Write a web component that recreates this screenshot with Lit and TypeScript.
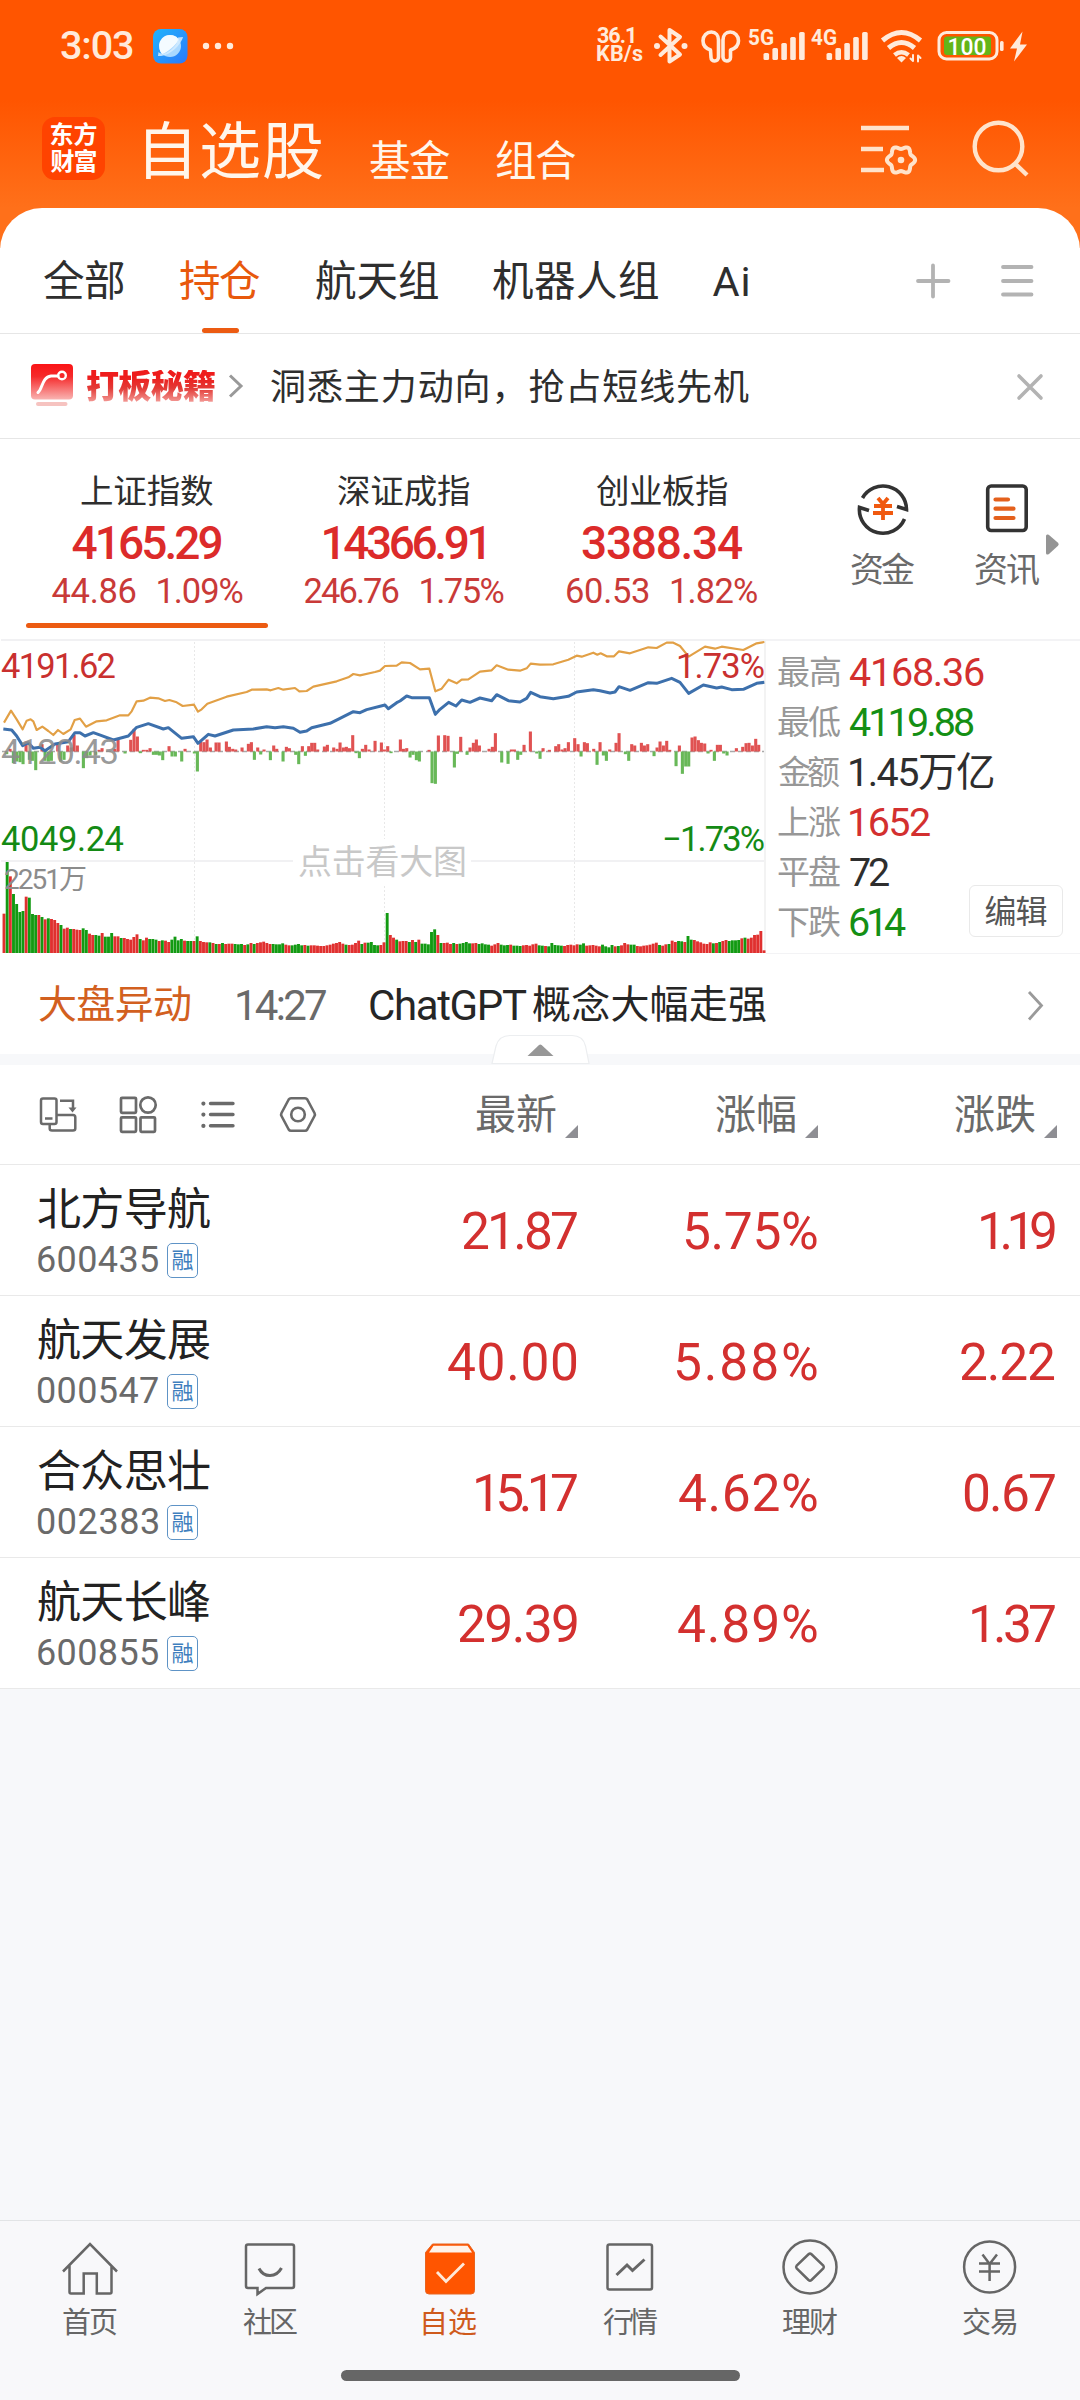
import { LitElement, html, svg, css } from "lit";
import { customElement, property } from "lit/decorators.js";

const measurer = document.createElement("canvas").getContext("2d")!;

/** One line of text whose visible glyphs span exactly `w` pixels. */
@customElement("fit-text")
class FitText extends LitElement {
  @property({ attribute: false }) text = "";
  @property({ attribute: false }) w = 0;

  static styles = css`
    :host { display: inline-block; flex: none; line-height: 1; white-space: pre; }
    span { display: block; font-kerning: none; }
  `;

  render() {
    return html`<span>${this.text}</span>`;
  }

  updated() {
    const cs = getComputedStyle(this);
    measurer.font = `${cs.fontWeight} ${cs.fontSize} ${cs.fontFamily}`;
    measurer.fontKerning = "none";
    const m = measurer.measureText(this.text);
    const ink = m.actualBoundingBoxRight + m.actualBoundingBoxLeft;
    const span = this.renderRoot.querySelector("span")!;
    const n = [...this.text].length;
    span.style.letterSpacing = `${((this.w - ink) / Math.max(1, n - 1)).toFixed(3)}px`;
    span.style.marginLeft = `${m.actualBoundingBoxLeft.toFixed(2)}px`;
    this.style.width = `${this.w}px`;
  }
}

const t = (text: string, w: number, cls = "") =>
  html`<fit-text class=${cls} .text=${text} .w=${w}></fit-text>`;

interface Index { name: string; value: string; vw: number; diff: string; dw: number; pct: string; pw: number; active?: boolean }
const indices: Index[] = [
  { name: "上证指数", value: "4165.29", vw: 149, diff: "44.86", dw: 84, pct: "1.09%", pw: 85, active: true },
  { name: "深证成指", value: "14366.91", vw: 161, diff: "246.76", dw: 94, pct: "1.75%", pw: 83 },
  { name: "创业板指", value: "3388.34", vw: 160, diff: "60.53", dw: 82, pct: "1.82%", pw: 86 },
];

const tabs: [string, number][] = [["全部", 80], ["持仓", 80], ["航天组", 122], ["机器人组", 165], ["Ai", 36]];

const stats: [string, string, number, string][] = [
  ["最高", "4168.36", 134, "red"],
  ["最低", "4119.88", 124, "green"],
  ["金额", "1.45万亿", 144, "dark"],
  ["上涨", "1652", 80, "red"],
  ["平盘", "72", 39, "dark"],
  ["下跌", "614", 56, "green"],
];

const stocks: { name: string; code: string; cells: [string, number][] }[] = [
  { name: "北方导航", code: "600435", cells: [["21.87", 114], ["5.75%", 132], ["1.19", 74]] },
  { name: "航天发展", code: "000547", cells: [["40.00", 129], ["5.88%", 141], ["2.22", 94]] },
  { name: "合众思壮", code: "002383", cells: [["15.17", 101], ["4.62%", 138], ["0.67", 91]] },
  { name: "航天长峰", code: "600855", cells: [["29.39", 118], ["4.89%", 139], ["1.37", 83]] },
];

/* Minute volume, three units per pixel; a trailing g marks a falling minute. */
const volume = (
  "118 273g 230 177g 147g 123g 126g 169 166g 117g 114g 114 108g 101 104g 102 99 90 84g 73 76 72g 72 70 69 74g 69g 58 54 54g 52g 60 49g 49g 60g 50 50 45g 45 42 " +
  "40 48 56 42g 38 46 42g 42g 40g 36 38g 37 33 40g 49g 38g 42g 37 36g 36g 36 50g 36 33 32 32g 30 27g 27 30g 27 28 28 27g 26g 27g 24 26g 30 27g " +
  "30 32 34 30 27 27g 26g 26g 29g 25 23 23g 25g 27g 23g 24 22g 23 23 22 21 21 23 25 28 30 33 28 25g 24 25 30 37 27g 31 31g 33g 24g 23g 24 " +
  "32 120g 54 46 40g 35 36 36 33g 39 33g 40 28g 28g 26g 63g 71g 54 30g 30 31 27 30g 27 28g 30g 33g 29g 29 30 27g 29g 26g 25g 22 26 30 25g 23g 24g " +
  "25 22g 22g 21g 23 24 22 26 28 23g 22g 21 20g 30g 24g 23g 22g 21 24 25 23 26 25g 29g 22 23 24 22 20 25g 20g 17g 24g 20 21g 23 30 26 25g 25g " +
  "21 20 22 23 25 28 31 24g 22 26 27g 37 33 36g 35g 33 51g 40g 39 35 32 28 27 32 29g 30 33g 36 39 36g 38g 38g 39g 44 46g 43 46 54 55 66 8 0 100"
).split(" ");

/* Difference bars around the base line: x and signed height, three units per pixel. */
const swing: number[][] = [
  [20, -8], [30, 8], [40, -35], [50, -30], [60, -32], [69, -38], [78, 30], [88, -25], [97, -28], [107, -56], [126, 22], [135, -28], [145, -30], [154, -28],
  [173, 20], [182, -30], [192, -25], [203, 18], [213, 12], [222, 50], [232, 18], [250, -50], [260, -20], [270, -12], [287, -10], [297, 5], [306, 10], [344, 8], [354, 35], [375, -6],
  [392, 35], [402, 68], [412, 45], [421, -5], [430, 5], [440, 5], [450, 10], [460, -10], [469, -10], [478, -12], [488, -26], [507, 16], [516, -15], [526, -15],
  [545, -30], [555, 8], [583, -6], [592, -60], [602, 30], [612, 28], [621, 36], [631, 12], [648, 27], [657, 27], [679, 30], [688, 14], [698, 8], [707, 6], [726, 12], [745, 23], [754, 28],
  [763, -25], [773, 12], [782, -9], [792, 6], [811, -26], [821, 18], [830, 8], [849, -30], [859, 14], [868, 10], [887, -10], [896, -38], [907, 16], [916, -13], [926, 16],
  [935, 26], [944, 26], [953, 6], [973, 15], [982, 20], [1001, 12], [1011, 8], [1020, 27], [1030, 12], [1039, 14], [1048, 10], [1058, 49], [1068, -5], [1078, -20],
  [1087, 8], [1097, 20], [1107, 6], [1125, 32], [1144, 27], [1153, 6], [1163, 16], [1173, -5], [1201, 36], [1210, 8], [1220, 10], [1230, -18], [1239, -10], [1249, -26], [1258, -30],
  [1287, 5], [1296, -95], [1306, -97], [1315, 48], [1334, 49], [1344, 47], [1363, -48], [1372, -7], [1382, 44], [1401, -10], [1410, 12], [1420, 26], [1429, 36], [1438, 18], [1467, 8], [1477, 14],
  [1486, 55], [1505, -33], [1524, -37], [1534, 6], [1543, 6], [1553, -25], [1562, -10], [1572, 20], [1591, 60], [1610, -6], [1620, -22], [1629, 10], [1648, 5], [1667, 16], [1676, 22], [1686, 6], [1695, 10], [1705, 28],
  [1724, 40], [1734, 22], [1743, -15], [1753, 28], [1762, 25], [1781, 8], [1791, -40], [1800, 28], [1810, -12], [1819, -28], [1829, 6], [1848, 26], [1857, 55], [1876, -8], [1886, -28], [1895, 22], [1904, 18],
  [1924, 26], [1933, 18], [1943, 22], [1962, -14], [1971, 12], [1980, 30], [1990, 18], [2000, 32], [2009, 5], [2028, -44], [2038, 18], [2047, -67], [2057, -45], [2066, -45], [2076, 42], [2085, 45], [2095, 34], [2104, 26], [2114, 24],
  [2124, -6], [2133, 5], [2143, -28], [2152, 20], [2161, 20], [2171, -6], [2181, -12], [2209, 10], [2228, 14], [2238, 25], [2247, 26], [2257, 18], [2267, 38], [2276, 20],
];

const orangeLine =
  "12,278 33,242 50,268 68,298 80,272 92,268 100,274 110,300 127,290 145,303 160,315 174,300 190,312 212,298 224,270 240,266 258,290 290,274 320,271 360,256 385,256 395,244 410,214 430,212 450,203 475,205 495,213 508,210 530,217 548,228 582,224 594,245 605,238 622,221 680,200 740,186 755,179 800,178 812,181 835,174 850,179 885,174 898,184 920,183 940,170 1010,154 1045,142 1060,132 1080,136 1125,126 1140,122 1155,108 1190,107 1205,97 1230,99 1260,118 1288,116 1306,184 1325,176 1346,149 1370,160 1385,149 1405,148 1440,125 1475,121 1490,106 1525,119 1560,122 1580,115 1592,101 1620,104 1660,103 1705,89 1730,77 1745,80 1780,68 1792,74 1802,70 1820,79 1842,79 1857,64 1890,70 1945,52 1970,54 2000,38 2020,38 2040,48 2066,80 2115,50 2145,56 2165,50 2230,60 2270,40 2293,36";
const blueLine =
  "10,297 35,300 50,318 68,347 85,338 100,355 120,352 135,362 165,342 205,335 225,308 240,308 255,318 280,308 305,317 340,330 385,318 410,292 445,281 490,297 505,293 545,325 580,320 594,340 625,313 645,318 700,300 760,297 800,290 825,293 850,290 880,295 900,307 920,303 935,293 990,280 1020,265 1060,245 1080,248 1100,239 1155,225 1165,236 1190,218 1200,213 1220,198 1235,203 1288,203 1306,253 1320,238 1346,217 1368,228 1385,210 1410,217 1440,204 1475,212 1490,194 1525,212 1560,216 1580,205 1592,187 1620,200 1660,206 1705,199 1730,186 1780,179 1800,182 1830,189 1845,186 1857,170 1890,181 1945,158 1970,160 2015,145 2040,157 2066,190 2110,165 2150,174 2165,171 2195,179 2230,178 2270,160 2293,157";

const gearPath = (cx: number, cy: number, r: number, amp: number) => {
  let d = "";
  for (let i = 0; i <= 72; i++) {
    const a = (i / 72) * Math.PI * 2;
    const rr = r + amp * Math.cos(6 * a);
    d += `${i ? "L" : "M"}${(cx + rr * Math.cos(a)).toFixed(2)} ${(cy + rr * Math.sin(a)).toFixed(2)}`;
  }
  return d + "Z";
};

@customElement("market-chart")
class MarketChart extends LitElement {
  static styles = css`
    :host { display: block; width: 766px; height: 314px; }
    svg { display: block; }
    text { font-family: Roboto, "Noto Sans CJK SC", sans-serif; font-size: 34.5px; }
    .up { fill: #c9302f; }
    .down { fill: #148a14; }
    .mid { fill: #8c8c8c; fill-opacity: 0.9; }
    .vol { fill: #8c8c8c; font-size: 28px; }
    .hint { fill: #c8c8c8; font-size: 34px; }
  `;

  render() {
    return html`<svg width="766" height="314" viewBox="0 0 766 314">
      <path d="M1 1H766M1 222H766" stroke="#f1f1f3" stroke-width="2" fill="none" />
      <path d="M194.5 3V313M384.5 3V313M574.5 3V313" stroke="#e8e8e8" stroke-width="1" stroke-dasharray="2 2" />
      <path d="M765 0V314" stroke="#f3f3f3" stroke-width="2" />
      <rect x="293" y="200" width="178" height="46" fill="#fff" />
      <path d="M2 112.5H764" stroke="#8d8d8d" stroke-width="1.3" stroke-dasharray="5 3" opacity=".75" />
      ${swing.map(([x, h]) => svg`<rect x=${x / 3 - 1.5} y=${112.5 - Math.max(h, 0) / 3} width="3.1" height=${Math.abs(h) / 3}
        fill=${h > 0 ? "#e05252" : "#68b858"} />`)}
      ${volume.map((v, i) => svg`<rect x=${(4 + i * 3.1667 - 1.45).toFixed(2)} y=${314 - parseInt(v) / 3} width="2.9" height=${parseInt(v) / 3}
        fill=${v.endsWith("g") ? "#129a12" : "#e0302f"} />`)}
      <g transform="translate(0 -9) scale(.33333)" fill="none" stroke-linejoin="round">
        <polyline points=${orangeLine} stroke="#e2a046" stroke-width="6.5" />
        <polyline points=${blueLine} stroke="#3d70ac" stroke-width="9" />
      </g>
      <text class="up" x="1" y="39" textLength="115">4191.62</text>
      <text class="mid" x="1" y="124.5" textLength="118">4120.43</text>
      <text class="down" x="1" y="212" textLength="123">4049.24</text>
      <text class="vol" x="4" y="250" textLength="83">2251万</text>
      <text class="up" x="676" y="39" textLength="89">1.73%</text>
      <text class="down" x="662" y="212" textLength="103">−1.73%</text>
      <text class="hint" x="298" y="235" textLength="169">点击看大图</text>
    </svg>`;
  }
}

@customElement("app-root")
class AppRoot extends LitElement {
  static styles = css`
    :host {
      display: flex; flex-direction: column; width: 1080px; height: 2400px; overflow: hidden;
      background: #f7f8fa; color: #2e2e2e; font-family: Roboto, "Noto Sans CJK SC", sans-serif; line-height: 1;
    }
    svg { display: block; flex: none; overflow: visible; }
    .red { color: #d3302f; }
    .green { color: #148f14; }
    .dark { color: #2e2e2e; }

    .top { height: 248px; flex: none; background: linear-gradient(#ff5500 0, #ff5500 100px, #ff701a 208px, #ff701a); color: #fff6ec; }
    .status { height: 92px; display: flex; box-sizing: border-box; padding-left: 61px; color: #ffeadb; align-items: flex-start; }
    .clock { font-size: 39.5px; font-weight: 500; margin-top: 26px; }
    .status-left { margin: 28px 0 0 20px; }
    .speed { display: flex; flex-direction: column; margin: 27px 0 0 364px; font-size: 21.5px; font-weight: 700; }
    .speed fit-text { height: 18px; line-height: 18px; }
    .status-right { margin: 24px 0 0 8px; }
    .title-row { height: 116px; box-sizing: border-box; padding: 0 0 24px 42px; display: flex; align-items: flex-end; }
    .logo { width: 63px; height: 63px; border-radius: 13px; background: #ff4300; margin-bottom: 4px; display: flex; flex-direction: column; align-items: center; justify-content: center; gap: 3px; color: #fff; font-size: 24px; font-weight: 700; }
    .title { font-size: 62px; margin-left: 41px; }
    .sub { font-size: 41.5px; margin: 0 0 2px 48px; }
    .sub + .sub { margin-left: 46px; }
    .ic-menu { margin: 0 0 4px 282px; }
    .ic-search { margin: 0 0 4px 49px; }

    .card { margin-top: -40px; background: #fff; border-radius: 42px 42px 0 0; flex: none; }
    .tabs { height: 125px; box-sizing: border-box; padding: 28px 0 0 44px; display: flex; }
    .tab { height: 97px; display: flex; flex-direction: column; align-items: center; font-size: 41.5px; margin-right: 56px; }
    .tab:nth-child(3) { margin-right: 55px; }
    .tab:nth-child(4) { margin-right: 54px; }
    .tab .lbl { flex: 1; display: flex; align-items: center; }
    .bar { width: 37px; height: 5px; border-radius: 3px; }
    .tab.on { color: #e8590c; }
    .tab.on .bar { background: #ec5b12; }
    .tab-tools { margin: 27px 0 0 110px; }
    .promo { height: 105px; box-sizing: border-box; border-top: 1px solid #e6e6e6; display: flex; align-items: center; padding-left: 31px; }
    .promo-name { font-size: 33px; font-weight: 900; margin-left: 13px; background: linear-gradient(#ee1c1c 20%, #e33a36 55%, #f4a09c 100%); -webkit-background-clip: text; background-clip: text; color: transparent; }
    .promo-chev { margin-left: 13px; }
    .promo-text { font-size: 36px; margin: 4px 0 0 27px; }
    .promo-x { margin-left: 268px; margin-top: 2px; }

    .indices { height: 201px; box-sizing: border-box; border-top: 1px solid #e6e6e6; display: flex; padding-left: 18px; }
    .index { width: 258px; padding-top: 27px; display: flex; flex-direction: column; align-items: center; }
    .index + .index { position: relative; left: -1px; }
    .iname, .ivalue, .ichange { display: flex; align-items: center; flex: none; }
    .iname { height: 52px; font-size: 33.5px; }
    .ivalue { height: 50px; font-size: 46px; font-weight: 500; color: #dc2b2a; }
    .ichange { height: 47px; font-size: 34.5px; gap: 22px; color: #c93a38; }
    .iline { width: 242px; height: 5px; border-radius: 3px; margin-top: 8px; }
    .on .iline { background: #ec5b12; }
    .quick { display: flex; margin-left: 29px; position: relative; }
    .qitem { width: 124px; padding-top: 41px; display: flex; flex-direction: column; align-items: center; font-size: 34px; color: #6a6a6a; gap: 17px; }
    .more { position: absolute; left: 225px; top: 95px; }

    .market { display: flex; height: 315px; position: relative; }
    .stats { flex: 1; padding: 6.5px 0 0 12px; box-sizing: border-box; border-top: 2px solid #f3f3f5; border-bottom: 1px solid #f3f3f5; }
    .stat { height: 50px; display: flex; align-items: center; }
    .stat .k { font-size: 33px; color: #979797; }
    .stat .v { font-size: 39.5px; margin-left: 10px; }
    .edit { position: absolute; left: 969px; top: 246px; width: 94px; height: 52px; box-sizing: border-box; border: 1px solid #e9e9e9; border-radius: 6px; background: #fff; display: flex; align-items: center; justify-content: center; font-size: 32px; color: #555; padding-top: 2px; }

    .news { height: 100px; box-sizing: border-box; padding: 3px 0 0 39px; display: flex; align-items: center; font-size: 39px; position: relative; }
    .news .tag { color: #d2601f; }
    .news .time { font-size: 42px; color: #6a6a6a; margin-left: 47px; }
    .news .head { margin-left: 44px; color: #262626; font-size: 42px; }
    .news .head2 { margin-left: 6px; color: #262626; }
    .news .chev { margin-left: 262px; }
    .strip { height: 11px; background: #f7f8fa; }
    .fold { position: absolute; left: 490px; top: 80px; }

    .grid { display: grid; grid-template-columns: 339px 239px 240px 262px; align-items: center; box-sizing: border-box; border-bottom: 1px solid #e9e9e9; }
    .thead { height: 100px; }
    .views { display: flex; gap: 36px; padding-left: 36px; }
    .col { display: flex; justify-content: flex-end; align-items: center; font-size: 41px; color: #6a6a6a; gap: 9px; }
    .col:last-child { padding-right: 23px; }
    .col fit-text { margin-top: 2px; }
    .col svg { margin-top: 34px; }
    .row { height: 131px; }
    .stock { padding: 4px 0 0 38px; }
    .stock .name { font-size: 44px; color: #222; display: block; margin-top: 2px; }
    .codeline { display: flex; align-items: center; margin-top: 10px; gap: 9px; font-size: 36px; color: #6a6a6a; }
    .badge { width: 31px; height: 35px; box-sizing: border-box; border: 1.5px solid #5e93c6; border-radius: 5px; display: flex; align-items: center; justify-content: center; font-size: 22px; color: #3f7fbe; padding-top: 1px; }
    .num { display: flex; justify-content: flex-end; font-size: 51.5px; color: #d3302f; padding: 4px 1px 0 0; }
    .num:last-child { padding-right: 25px; }

    .fill { flex: 1; }
    .nav { height: 180px; flex: none; box-sizing: border-box; background: #f8f8fa; border-top: 1px solid #e2e4e6; display: flex; flex-direction: column; align-items: center; }
    .nav-items { display: flex; width: 1080px; height: 149px; }
    .nav-item { width: 180px; padding-top: 16px; display: flex; flex-direction: column; align-items: center; gap: 12px; color: #666; font-size: 29px; }
    .nav-item.on { color: #cf5a1c; }
    .home { width: 399px; height: 11px; border-radius: 6px; background: #666; }
  `;

  private statusRight() {
    const bars = (x: number) => [0, 1, 2, 3, 4].map((i) => {
      const h = [7, 12, 17, 23, 28][i];
      return svg`<rect x=${x + i * 8.9} y=${36.5 - h} width="5.6" height=${h} rx="1.6" fill="#ffeadb" />`;
    });
    return html`<svg class="status-right" width="380" height="44" viewBox="651 24 380 44">
      <g fill="none" stroke="#ffeadb" stroke-width="4" stroke-linejoin="round" stroke-linecap="round">
        <path d="M660.5 36.5L680 54.5L669.5 61.5V30L680 37L660.5 55" />
        <path d="M710.5 50C705.5 48.5 703 44.8 703 40.8C703 35.6 706.8 32 711.3 32C715.8 32 718.5 35.5 718.5 40V57C718.5 62.3 711 62.3 711 57.5Z" stroke-width="3.6" />
        <path d="M730.5 50C735.5 48.5 738.5 44.8 738.5 40.8C738.5 35.6 734.7 32 730.2 32C725.7 32 723 35.5 723 40V57C723 62.3 730.5 62.3 730.5 57.5Z" stroke-width="3.6" />
        <path d="M882.5 40.5Q901.5 24.5 920.5 40.5" stroke-width="5" stroke-linecap="butt" />
        <path d="M888.5 48Q901.5 37 914.5 48" stroke-width="5" stroke-linecap="butt" />
        <path d="M894.5 55Q901.5 49.5 908.5 55" stroke-width="4.6" stroke-linecap="butt" />
        <path d="M913 55V61L910.5 58.5M918 61.5V55.5L920.5 58" stroke-width="2" />
      </g>
      <g fill="#ffeadb">
        <circle cx="657" cy="46" r="3" /><circle cx="684.5" cy="46" r="3" />
        <path d="M897 58Q901.5 54 906 58L901.5 62.5Z" />
        <path d="M1022.5 31.5L1010 48.5H1017L1014 61.5L1027 44.5H1020Z" />
        <rect x="1000" y="41" width="3.6" height="10" rx="1.6" />
      </g>
      <g transform="translate(0 23.5)">${bars(763.5)}${bars(826.5)}</g>
      <rect x="939" y="32.5" width="58" height="26.5" rx="7.5" fill="none" stroke="#ffeadb" stroke-width="3" />
      <rect x="944" y="36.5" width="47" height="18.5" rx="3" fill="#64b418" />
      <g font-family="Roboto, sans-serif" font-weight="700" font-size="22" fill="#ffeadb">
        <text x="748" y="45" textLength="26" lengthAdjust="spacingAndGlyphs">5G</text>
        <text x="811" y="45" textLength="26" lengthAdjust="spacingAndGlyphs">4G</text>
        <text x="947.5" y="54.5" font-size="24" font-weight="500" fill="#fff" textLength="39" lengthAdjust="spacingAndGlyphs">100</text>
      </g>
    </svg>`;
  }

  private top() {
    return html`<div class="top">
      <div class="status">
        ${t("3:03", 72, "clock")}
        <svg class="status-left" width="80" height="36" viewBox="153 28 80 36">
          <defs><linearGradient id="b" x1="0" y1="0" x2="1" y2="1"><stop offset="0" stop-color="#22b4fb" /><stop offset="1" stop-color="#2b79fb" /></linearGradient></defs>
          <rect x="153" y="29" width="34.5" height="34.5" rx="8" fill="url(#b)" />
          <circle cx="170" cy="46" r="11" fill="#a9d8ff" />
          <path d="M159.5 49A11 11 0 0 1 179 39.5C176 45 168 52 162 54.2A11 11 0 0 1 159.5 49Z" fill="#f4fbff" />
          <path d="M178 37.5L183 37C181 45 169 57 158 56L158.5 52C160 53.5 163 54.5 166 53C173 49.5 178.5 43 178 37.5Z" fill="#d3ecff" opacity=".85" />
          <g fill="#ffeadb"><circle cx="206" cy="46" r="3.2" /><circle cx="218" cy="46" r="3.2" /><circle cx="230" cy="46" r="3.2" /></g>
        </svg>
        <div class="speed">${t("36.1", 37)}${t("KB/s", 46)}</div>
        ${this.statusRight()}
      </div>
      <div class="title-row">
        <div class="logo">${t("东方", 46)}${t("财富", 46)}</div>
        ${t("自选股", 176, "title")}${t("基金", 80, "sub")}${t("组合", 80, "sub")}
        <svg class="ic-menu" width="61" height="60" viewBox="858 120 61 60" fill="none" stroke="#ffe3cb" stroke-width="4.4">
          <path d="M861 128H909M861 149H883M861 170H884" />
          <path d=${gearPath(901, 160, 12.6, 1.5)} stroke-width="4" /><circle cx="901" cy="160" r="3.3" fill="#ffe3cb" stroke="none" />
        </svg>
        <svg class="ic-search" width="64" height="64" viewBox="968 116 64 64" fill="none" stroke="#ffe3cb" stroke-width="4.4">
          <circle cx="998.5" cy="146.5" r="23.8" /><path d="M1014.5 163L1027 175" />
        </svg>
      </div>
    </div>`;
  }

  private promo() {
    return html`<div class="promo">
      <svg width="42" height="44" viewBox="31 365 42 44">
        <defs><linearGradient id="p" x1="0" y1="0" x2="0" y2="1"><stop offset="0" stop-color="#fb1416" /><stop offset=".35" stop-color="#f52a2b" /><stop offset="1" stop-color="#f9b4b2" /></linearGradient></defs>
        <rect x="31" y="365" width="42" height="35.5" rx="4" fill="url(#p)" />
        <rect x="36" y="403" width="31.5" height="4" rx="2" fill="#f6c3c0" />
        <path d="M38 393.5C42.5 390 42 378 51 377H58" fill="none" stroke="#fff" stroke-width="3" stroke-linecap="round" />
        <circle cx="62" cy="376.5" r="3.8" fill="none" stroke="#fff" stroke-width="2.4" />
      </svg>
      ${t("打板秘籍", 129, "promo-name")}
      <svg class="promo-chev" width="16" height="26" viewBox="229 373 16 26" fill="none" stroke="#999" stroke-width="3"><path d="M231 375.5L242 386L231 396.5" /></svg>
      ${t("洞悉主力动向，抢占短线先机", 478, "promo-text")}
      <svg class="promo-x" width="26" height="26" viewBox="0 0 26 26" fill="none" stroke="#b3b3b3" stroke-width="3.6" stroke-linecap="round"><path d="M2 2L24 24M24 2L2 24" /></svg>
    </div>`;
  }

  private indexRow() {
    return html`<div class="indices">
      ${indices.map((x) => html`<div class="index ${x.active ? "on" : ""}">
        <div class="iname">${t(x.name, 132)}</div>
        <div class="ivalue">${t(x.value, x.vw)}</div>
        <div class="ichange">${t(x.diff, x.dw)}${t(x.pct, x.pw)}</div>
        <div class="iline"></div>
      </div>`)}
      <div class="quick">
        <div class="qitem">
          <svg width="56" height="56" viewBox="0 0 56 56" fill="none" stroke="#333" stroke-width="3.6">
            <path d="M7.5 18A23.5 23.5 0 0 1 51.5 29.5L42 26.5" />
            <path d="M49.5 39A23.5 23.5 0 0 1 4.5 27.5L14 30.5" />
            <path d="M23 18L28 24L33 18M28 24V40M19 26H37M18 33H38" stroke="#f0590f" stroke-width="3.8" />
          </svg>
          ${t("资金", 64)}
        </div>
        <div class="qitem">
          <svg width="56" height="56" viewBox="0 0 56 56" fill="none" stroke="#333" stroke-width="3.6">
            <rect x="8.7" y="6" width="38.5" height="44.5" rx="3.5" />
            <path d="M16.5 19.5H29M16.5 28.7H34.5M16.5 38H34.5" stroke="#e4601c" stroke-width="4.2" stroke-linecap="round" />
          </svg>
          ${t("资讯", 64)}
        </div>
        <svg class="more" width="13" height="21" viewBox="0 0 13 21" fill="#949494"><path d="M0 2Q0 0 2 .5L3 1L12 8.8Q13.5 10.3 12 11.8L3 20L2 20.5Q0 21 0 19Z" /></svg>
      </div>
    </div>`;
  }

  private market() {
    return html`<div class="market">
      <market-chart></market-chart>
      <div class="stats">
        ${stats.map(([k, v, w, c]) => html`<div class="stat">${t(k, 62, "k")}${t(v, w, "v " + c)}</div>`)}
      </div>
      <div class="edit">${t("编辑", 61)}</div>
    </div>
    <div class="news">
      ${t("大盘异动", 151, "tag")}${t("14:27", 89, "time")}${t("ChatGPT", 157, "head")}${t("概念大幅走强", 233, "head2")}
      <svg class="chev" width="16" height="30" viewBox="0 0 16 30" fill="none" stroke="#9a9a9a" stroke-width="2.8"><path d="M1 1L13.500 14.500L1 28.500" /></svg>
      <svg class="fold" width="101" height="32" viewBox="490 1034 101 32">
        <path d="M492 1063.5L496 1046Q499 1035.5 510 1035.5H572Q583 1035.5 585.5 1046L589 1063.5Z" fill="#fff" stroke="#eceef0" stroke-width="1.2" />
        <path d="M527.5 1056L539 1045Q540.3 1044 541.6 1045L553.5 1056Z" fill="#979797" />
      </svg>
    </div>
    <div class="strip"></div>`;
  }

  private table() {
    const tri = html`<svg width="13" height="13" viewBox="0 0 13 13"><path d="M13 0V13H0Z" fill="#8e8e93" /></svg>`;
    return html`<div class="grid thead">
      <div class="views">
        <svg width="44" height="44" viewBox="36 1092.5 44 44" fill="none" stroke="#6a6a6a" stroke-width="2.5">
          <rect x="41" y="1098" width="15.5" height="25.5" rx="2" /><path d="M45 1118H52.5" />
          <path d="M60 1100.3H73V1108" /><path d="M68.5 1107H76.5L72.5 1112Z" fill="#6a6a6a" stroke="none" />
          <path d="M56.5 1114.5H73Q75.3 1114.5 75.3 1117V1128Q75.3 1130 73 1130H52Q49.7 1130 49.7 1128V1124" />
        </svg>
        <svg width="44" height="44" viewBox="116 1092.5 44 44" fill="none" stroke="#6a6a6a" stroke-width="2.7">
          <rect x="121" y="1097.3" width="15" height="15" rx="1" /><circle cx="148" cy="1104.5" r="7.7" />
          <rect x="121" y="1116.8" width="15" height="14.5" rx="1" /><rect x="140.5" y="1116.8" width="14.5" height="14.5" rx="1" />
        </svg>
        <svg width="44" height="44" viewBox="196 1092.5 44 44" fill="none" stroke="#6a6a6a" stroke-width="3.4" stroke-linecap="round">
          <path d="M210.5 1103H233M210.5 1114H233M210.5 1125.3H233" /><path d="M203.4 1103v.1M203.4 1114v.1M203.4 1125.3v.1" stroke-width="4.2" />
        </svg>
        <svg width="44" height="44" viewBox="276 1092.5 44 44" fill="none" stroke="#6a6a6a" stroke-width="2.6" stroke-linejoin="round">
          <path d="M291 1097.7H305Q306.5 1097.7 307.3 1099L314.5 1112.5Q315.3 1114 314.5 1115.5L307.3 1129Q306.5 1130.3 305 1130.3H291Q289.5 1130.3 288.7 1129L281.5 1115.5Q280.7 1114 281.5 1112.5L288.7 1099Q289.5 1097.7 291 1097.7Z" />
          <circle cx="298" cy="1114" r="6.8" />
        </svg>
      </div>
      <div class="col">${t("最新", 80)}${tri}</div>
      <div class="col">${t("涨幅", 80)}${tri}</div>
      <div class="col">${t("涨跌", 80)}${tri}</div>
    </div>
    ${stocks.map((s) => html`<div class="grid row">
      <div class="stock">
        ${t(s.name, 172, "name")}
        <div class="codeline">${t(s.code, 120)}<div class="badge">${t("融", 20)}</div></div>
      </div>
      ${s.cells.map(([v, w]) => html`<div class="num">${t(v, w)}</div>`)}
    </div>`)}`;
  }

  private nav() {
    const icons = [
      svg`<path d="M3 35.5L30 8L57 35.5M9.500 29.500V56Q9.500 57.500 11 57.500H23.700V37.500H36.800V57.500H50Q51.500 57.500 51.500 56V29.500" transform="translate(0 -1)" />`,
      svg`<path d="M8 7.500H52Q54 7.500 54 9.500V49Q54 51 52 51H26L17.500 57V51H8Q6 51 6 49V9.500Q6 7.500 8 7.500Z" /><path d="M19 31.500C24 41 36 41 41.500 31" stroke-width="3" />`,
      svg`<path d="M12.500 7H48.500L54.500 15.500V53.500Q54.500 57 51 57H9Q5.500 57 5.500 53.500V15.500Z" fill="#ff5500" stroke="#e8641f" stroke-width="1" /><path d="M13.500 8.800H47.500L52 15.500H9Z" fill="#fff3ea" stroke="none" /><path d="M17 35L26 44.500L44 26.500" stroke="#ffe9d8" stroke-width="2.800" />`,
      svg`<rect x="7.500" y="7.500" width="44.500" height="45" rx="2" /><path d="M16.500 38L27 28L32.500 33.500L44.500 22.500" stroke-width="3" />`,
      svg`<circle cx="30" cy="30" r="26.500" /><path d="M28.500 17.300Q30 16 31.500 17.300L43.300 28.500Q44.500 30 43.300 31.500L31.500 43Q30 44.300 28.500 43L16.700 31.500Q15.500 30 16.700 28.500Z" />`,
      svg`<circle cx="29.600" cy="30" r="25.500" /><path d="M22.500 17.500L29.600 27L37 17.500M29.600 26.500V44M19 26.500H40M19 34.500H40" />`,
    ];
    const names = ["首页", "社区", "自选", "行情", "理财", "交易"];
    return html`<div class="nav">
      <div class="nav-items">
        ${names.map((n, i) => html`<div class="nav-item ${i === 2 ? "on" : ""}">
          <svg width="60" height="60" viewBox="0 0 60 60" fill="none" stroke="#666" stroke-width="2.500">${icons[i]}</svg>
          ${t(n, 54)}
        </div>`)}
      </div>
      <div class="home"></div>
    </div>`;
  }

  render() {
    return html`${this.top()}
      <div class="card">
        <div class="tabs">
          ${tabs.map(([n, w], i) => html`<div class="tab ${i === 1 ? "on" : ""}"><div class="lbl">${t(n, w)}</div><div class="bar"></div></div>`)}
          <svg class="tab-tools" width="120" height="36" viewBox="915 263 120 36" fill="none" stroke="#b3b3b3" stroke-width="3.8" stroke-linecap="round">
            <path d="M918 281H948.5M933 265.5V296.5M1003 267H1031.5M1003 281H1031.5M1003 294.5H1031.5" />
          </svg>
        </div>
        ${this.promo()}${this.indexRow()}${this.market()}${this.table()}
      </div>
      <div class="fill"></div>
      ${this.nav()}`;
  }
}
